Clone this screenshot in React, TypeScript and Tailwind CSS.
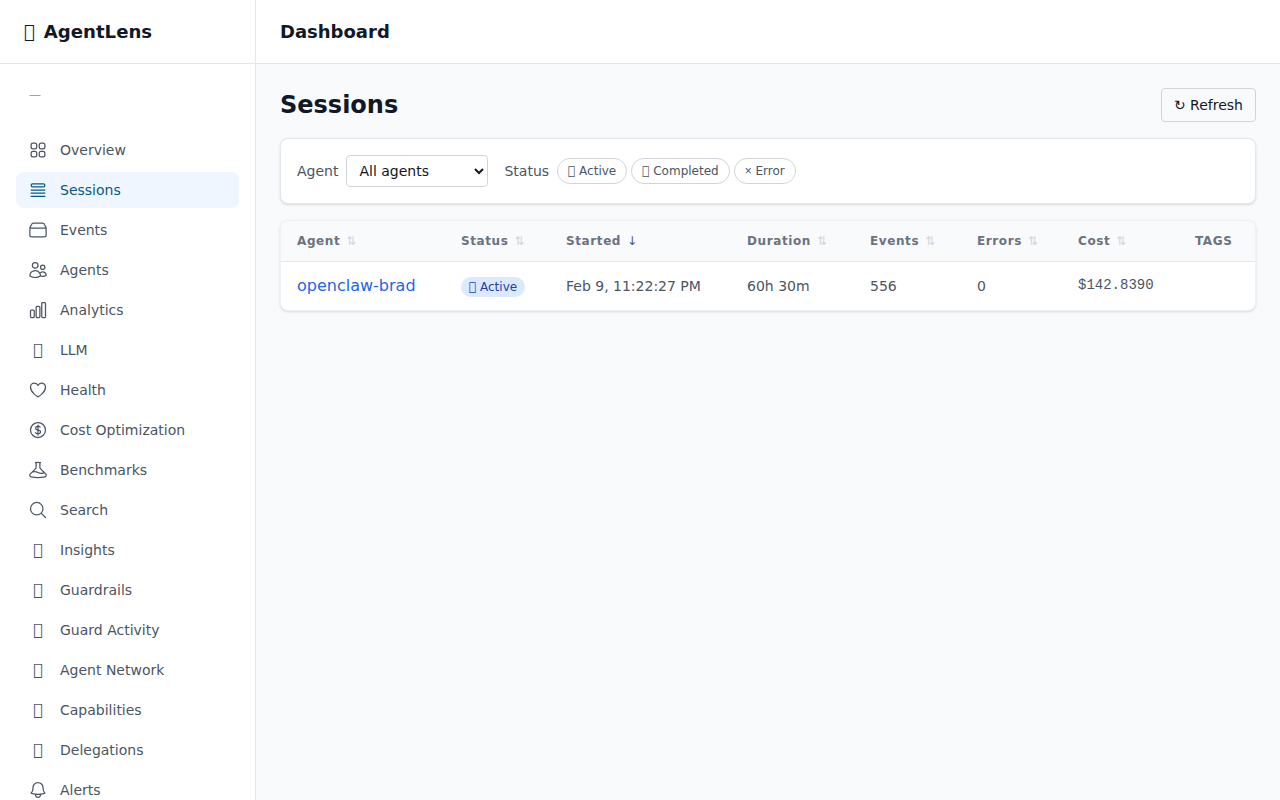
import React from "react";

const font = "font-['DejaVu_Sans',sans-serif]";

const ic = (paths: React.ReactNode) => (
  <svg viewBox="0 0 24 24" fill="none" stroke="currentColor" strokeWidth={1.5} strokeLinecap="round" strokeLinejoin="round" className="w-5 h-5 shrink-0">
    {paths}
  </svg>
);

const icons: Record<string, React.ReactNode> = {
  Overview: ic(<path d="M3.75 6A2.25 2.25 0 016 3.75h2.25A2.25 2.25 0 0110.5 6v2.25a2.25 2.25 0 01-2.25 2.25H6a2.25 2.25 0 01-2.25-2.25V6zM3.75 15.75A2.25 2.25 0 016 13.5h2.25a2.25 2.25 0 012.25 2.25V18a2.25 2.25 0 01-2.25 2.25H6A2.25 2.25 0 013.75 18v-2.25zM13.5 6a2.25 2.25 0 012.25-2.25H18A2.25 2.25 0 0120.25 6v2.25A2.25 2.25 0 0118 10.5h-2.25a2.25 2.25 0 01-2.25-2.25V6zM13.5 15.75a2.25 2.25 0 012.25-2.25H18a2.25 2.25 0 012.25 2.25V18A2.25 2.25 0 0118 20.25h-2.25A2.25 2.25 0 0113.5 18v-2.25z" />),
  Sessions: ic(<path d="M3.75 12h16.5m-16.5 3.75h16.5M3.75 19.5h16.5M5.625 4.5h12.75a1.875 1.875 0 010 3.75H5.625a1.875 1.875 0 010-3.75z" />),
  Events: ic(<path d="M2.25 9.75V18a2.25 2.25 0 002.25 2.25h15A2.25 2.25 0 0021.75 18V9.75M2.25 9.75h19.5M2.25 9.75c0-.5.2-1 .5-1.4L4.4 5.2A2.25 2.25 0 016.4 3.75h11.2a2.25 2.25 0 012 1.45l1.65 3.15c.3.4.5.9.5 1.4" />),
  Agents: ic(<path d="M15 19.128a9.38 9.38 0 002.625.372 9.337 9.337 0 004.121-.952 4.125 4.125 0 00-7.533-2.493M15 19.128v-.003c0-1.113-.285-2.16-.786-3.07M15 19.128v.106A12.318 12.318 0 018.624 21c-2.331 0-4.512-.645-6.374-1.766l-.001-.109a6.375 6.375 0 0111.964-3.07M12 6.375a3.375 3.375 0 11-6.75 0 3.375 3.375 0 016.75 0zm8.25 2.25a2.625 2.625 0 11-5.25 0 2.625 2.625 0 015.25 0z" />),
  Analytics: ic(<path d="M3 13.125C3 12.504 3.504 12 4.125 12h2.25c.621 0 1.125.504 1.125 1.125v6.75C7.5 20.496 6.996 21 6.375 21h-2.25A1.125 1.125 0 013 19.875v-6.75zM9.75 8.625c0-.621.504-1.125 1.125-1.125h2.25c.621 0 1.125.504 1.125 1.125v11.25c0 .621-.504 1.125-1.125 1.125h-2.25a1.125 1.125 0 01-1.125-1.125V8.625zM16.5 4.125c0-.621.504-1.125 1.125-1.125h2.25C20.496 3 21 3.504 21 4.125v15.75c0 .621-.504 1.125-1.125 1.125h-2.25a1.125 1.125 0 01-1.125-1.125V4.125z" />),
  Health: ic(<path d="M21 8.25c0-2.485-2.099-4.5-4.688-4.5-1.935 0-3.597 1.126-4.312 2.733-.715-1.607-2.377-2.733-4.313-2.733C5.1 3.75 3 5.765 3 8.25c0 7.22 9 12 9 12s9-4.78 9-12z" />),
  "Cost Optimization": ic(<path d="M12 6v12m-3-2.818l.879.659c1.171.879 3.07.879 4.242 0 1.172-.879 1.172-2.303 0-3.182C13.536 12.219 12.768 12 12 12c-.725 0-1.45-.22-2.003-.659-1.106-.879-1.106-2.303 0-3.182s2.9-.879 4.006 0l.415.33M21 12a9 9 0 11-18 0 9 9 0 0118 0z" />),
  Benchmarks: ic(<path d="M9.75 3.104v5.714a2.25 2.25 0 01-.659 1.591L5 14.5M9.75 3.104c-.251.023-.501.05-.75.082m.75-.082a24.301 24.301 0 014.5 0m0 0v5.714c0 .597.237 1.17.659 1.591L19.8 15.3M14.25 3.104c.251.023.501.05.75.082M19.8 15.3l-1.57.393A9.065 9.065 0 0112 15a9.065 9.065 0 00-6.23-.693L5 14.5m14.8.8l1.402 1.402c1.232 1.232.65 3.318-1.067 3.611A48.309 48.309 0 0112 21c-2.773 0-5.491-.235-8.135-.687-1.718-.293-2.3-2.379-1.067-3.61L5 14.5" />),
  Search: ic(<path d="M21 21l-5.197-5.197m0 0A7.5 7.5 0 105.196 5.196a7.5 7.5 0 0010.607 10.607z" />),
  Alerts: ic(<path d="M14.857 17.082a23.848 23.848 0 005.454-1.31A8.967 8.967 0 0118 9.75v-.7V9A6 6 0 006 9v.75a8.967 8.967 0 01-2.312 6.022c1.733.64 3.56 1.085 5.455 1.31m5.714 0a24.255 24.255 0 01-5.714 0m5.714 0a3 3 0 11-5.714 0" />),
};

const NOGLYPH = "\uE000";
const tofu = <span className="w-5 h-5 shrink-0 flex items-center justify-start pl-[5px] text-base leading-none">{NOGLYPH}</span>;

const nav: [string, React.ReactNode][] = [
  ["Overview", icons.Overview],
  ["Sessions", icons.Sessions],
  ["Events", icons.Events],
  ["Agents", icons.Agents],
  ["Analytics", icons.Analytics],
  ["LLM", tofu],
  ["Health", icons.Health],
  ["Cost Optimization", icons["Cost Optimization"]],
  ["Benchmarks", icons.Benchmarks],
  ["Search", icons.Search],
  ["Insights", tofu],
  ["Guardrails", tofu],
  ["Guard Activity", tofu],
  ["Agent Network", tofu],
  ["Capabilities", tofu],
  ["Delegations", tofu],
  ["Alerts", icons.Alerts],
];

const cols: [string, string, string, boolean][] = [
  ["Agent", "w-[164px]", "⇅", false],
  ["Status", "w-[105px]", "⇅", false],
  ["Started", "w-[181px]", "↓", true],
  ["Duration", "w-[123px]", "⇅", false],
  ["Events", "w-[107px]", "⇅", false],
  ["Errors", "w-[101px]", "⇅", false],
  ["Cost", "w-[117px]", "⇅", false],
];

const pills: React.ReactNode[] = [
  `${NOGLYPH} Active`,
  `${NOGLYPH} Completed`,
  <span key="error">
    <span className="font-['Liberation_Sans',sans-serif]">×</span> Error
  </span>,
];

export default function App() {
  return (
    <div className={`${font} h-[800px] w-[1280px] overflow-hidden flex bg-[#f9fafb] text-[#111827]`}>
      <aside className="w-64 shrink-0 h-full bg-white border-r border-[#e5e7eb] flex flex-col overflow-hidden">
        <div className="h-16 shrink-0 border-b border-[#e5e7eb] flex items-center px-6 gap-[9px] text-[18.1px] font-bold text-[#111827]">
          <span>{NOGLYPH}</span>
          <span>AgentLens</span>
        </div>
        <div className="h-[68px] shrink-0 pl-[29px] pt-[19px] text-xs leading-6 text-[#9ca3af]">—</div>
        <nav className="px-4 flex flex-col gap-1">
          {nav.map(([label, icon]) => (
            <div
              key={label}
              className={`h-9 shrink-0 rounded-lg px-3 flex items-center gap-3 text-sm ${label === "Sessions" ? "bg-[#eff6ff] text-[#075985]" : "text-[#4b5563]"}`}
            >
              {icon}
              <span>{label}</span>
            </div>
          ))}
        </nav>
      </aside>
      <div className="flex-1 min-w-0 flex flex-col">
        <header className="h-16 shrink-0 bg-white border-b border-[#e5e7eb] px-6 flex items-center text-lg font-semibold text-[#111827]">Dashboard</header>
        <main className="p-6 flex flex-col">
          <div className="flex items-center justify-between h-[34px]">
            <h1 className="text-2xl font-bold text-[#111827]">Sessions</h1>
            <button className="h-[34px] px-3 border border-[#d1d5db] rounded bg-[#f9fafb] text-sm text-[#111827]">↻ Refresh</button>
          </div>
          <div className="mt-4 h-[66px] bg-white border border-[#e5e7eb] rounded-lg shadow-sm px-4 flex items-center">
            <span className="text-sm text-[#4b5563] mr-2">Agent</span>
            <select className="h-8 w-[142px] border border-[#d1d5db] rounded bg-white pl-2 text-sm text-[#111827] mr-4">
              <option>All agents</option>
            </select>
            <span className="text-sm text-[#4b5563] mr-2">Status</span>
            <div className="flex gap-1">
              {pills.map((t, i) => (
                <span key={i} className="h-[26px] px-[10px] border border-[#d1d5db] rounded-full flex items-center text-xs text-[#4b5563]">{t}</span>
              ))}
            </div>
          </div>
          <div className="mt-4 bg-white border border-[#f0f1f4] rounded-lg shadow-sm overflow-hidden">
            <div className="h-[41px] flex items-center bg-[#f9fafb] border-b border-[#e5e7eb] pl-4 text-xs font-bold tracking-[0.6px] text-[#6b7280]">
              {cols.map(([name, w, s, active]) => (
                <div key={name} className={`${w} shrink-0 flex items-center gap-[6px]`}>
                  <span>{name}</span>
                  <span className={`text-xs font-normal ${active ? "text-[#4b5563]" : "text-[#d1d5db]"}`}>{s}</span>
                </div>
              ))}
              <div>TAGS</div>
            </div>
            <div className="h-12 flex items-center pl-4 text-sm text-[#4b5563]">
              <div className="w-[164px] shrink-0 text-base text-[#2563eb]">openclaw-brad</div>
              <div className="w-[105px] shrink-0">
                <span className="inline-flex h-5 items-center px-2 rounded-full bg-[#dbeafe] text-xs text-[#1e40af]">{NOGLYPH} Active</span>
              </div>
              <div className="w-[181px] shrink-0">Feb 9, 11:22:27 PM</div>
              <div className="w-[123px] shrink-0">60h 30m</div>
              <div className="w-[107px] shrink-0">556</div>
              <div className="w-[101px] shrink-0">0</div>
              <div className="w-[117px] shrink-0 -mt-0.5 font-['Liberation_Mono',monospace] text-sm">$142.8390</div>
            </div>
          </div>
        </main>
      </div>
    </div>
  );
}
